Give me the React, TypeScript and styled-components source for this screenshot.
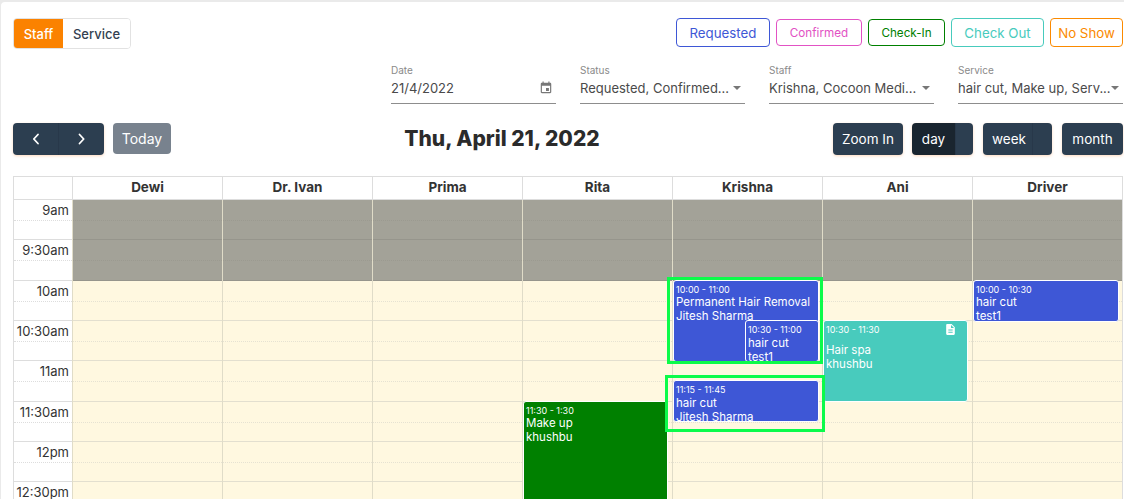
import React from "react";
import styled, { createGlobalStyle } from "styled-components";

const Global = createGlobalStyle`
  html, body { margin: 0; padding: 0; background: #eaeaea; }
  * { box-sizing: border-box; }
  body { font-family: Inter, "Liberation Sans", sans-serif; color: #333; }
`;

const Page = styled.div`
  height: 499px;
  overflow: hidden;
  padding: 2px 0 0 1px;
`;
const Card = styled.div`
  height: 100%;
  background: #fff;
  border-radius: 4px 0 0 0;
  padding: 16px 1px 0 12px;
`;
const TopRow = styled.div`
  display: flex;
  justify-content: space-between;
  align-items: flex-start;
  height: 31px;
`;
const Toggle = styled.div`
  display: flex;
  width: 118px;
  height: 31px;
  border: 1px solid #e2e2e2;
  border-radius: 4px;
  overflow: hidden;
`;
const ToggleItem = styled.div<{ $active?: boolean }>`
  flex: ${(p) => (p.$active ? "0 0 49px" : "1")};
  display: flex;
  align-items: center;
  justify-content: center;
  font-size: 13px;
  font-weight: 500;
  background: ${(p) => (p.$active ? "#fb8200" : "#fff")};
  color: ${(p) => (p.$active ? "#fff" : "#333f50")};
`;
const Legend = styled.div`
  display: flex;
  align-items: center;
  gap: 6px;
  height: 29px;
`;
const LegendItem = styled.div<{ $color: string; $small?: boolean; $width: number }>`
  display: flex;
  align-items: center;
  justify-content: center;
  width: ${(p) => p.$width}px;
  height: ${(p) => (p.$small ? 27 : 29)}px;
  border: 1px solid ${(p) => p.$color};
  border-radius: 4px;
  color: ${(p) => p.$color};
  font-size: ${(p) => (p.$small ? 11.7 : 13.3)}px;
`;
const Filters = styled.div`
  display: flex;
  justify-content: flex-end;
  gap: 24px;
  margin-top: 15px;
`;
const Field = styled.div`
  width: 165px;
  height: 40px;
  border-bottom: 1px solid #8d8d8d;
  display: flex;
  flex-direction: column;
`;
const FieldLabel = styled.div`
  font-size: 10px;
  line-height: 12px;
  color: #8a8a8a;
`;
const FieldValue = styled.div`
  display: flex;
  align-items: center;
  justify-content: space-between;
  height: 20px;
  margin-top: 2px;
  font-size: 13px;
  color: #4a4a4a;
  white-space: nowrap;
`;
const Caret = styled.span`
  width: 0;
  height: 0;
  margin-right: 4px;
  border-left: 4.5px solid transparent;
  border-right: 4.5px solid transparent;
  border-top: 4.5px solid #777;
`;
const Toolbar = styled.div`
  display: flex;
  justify-content: space-between;
  align-items: flex-start;
  margin-top: 19px;
  height: 32px;
`;
const ToolLeft = styled.div`
  display: flex;
  gap: 9px;
`;
const ToolRight = styled.div`
  display: flex;
  justify-content: flex-end;
`;
const NavGroup = styled.div`
  display: flex;
  border-radius: 4px;
  overflow: hidden;
  box-shadow: 0 1px 3px rgba(251, 150, 70, 0.35);
`;
const DarkButton = styled.div<{ $width: number; $active?: boolean; $edge?: boolean }>`
  display: flex;
  align-items: center;
  justify-content: ${(p) => (p.$edge ? "flex-start" : "center")};
  padding-left: ${(p) => (p.$edge ? 9 : 0)}px;
  width: ${(p) => p.$width}px;
  height: 32px;
  background: ${(p) => (p.$active ? "#1a252f" : "#2c3e50")};
  color: #fff;
  font-size: 13.5px;
  & + & {
    border-left: 1px solid #28384a;
  }
`;
const SplitButton = styled.div<{ $gap: number }>`
  display: flex;
  margin-left: ${(p) => p.$gap}px;
  border-radius: 4px;
  overflow: hidden;
  box-shadow: 0 1px 3px rgba(251, 150, 70, 0.35);
`;
const TodayButton = styled.div`
  display: flex;
  align-items: center;
  justify-content: center;
  width: 58px;
  height: 31px;
  border-radius: 4px;
  background: #78828e;
  color: #fff;
  font-size: 14px;
`;
const Title = styled.h2`
  margin: 0;
  font-size: 21px;
  line-height: 32px;
  font-weight: 800;
  color: #2b2b2b;
  white-space: nowrap;
`;
const Calendar = styled.div`
  margin-top: 21px;
  border: 1px solid #ddd;
  border-bottom: 0;
`;
const HeaderRow = styled.div`
  display: grid;
  grid-template-columns: 58px repeat(7, 1fr);
  height: 23px;
  border-bottom: 1px solid #ddd;
`;
const HeaderCell = styled.div`
  display: flex;
  align-items: center;
  justify-content: center;
  padding-bottom: 2px;
  border-left: 1px solid #ddd;
  font-size: 13.5px;
  font-weight: 700;
  color: #333;
  &:first-child { border-left: 0; }
`;
const Body = styled.div`
  display: grid;
  grid-template-columns: 58px repeat(7, 1fr);
`;
const TimeCol = styled.div``;
const TimeCell = styled.div`
  height: 40.33px;
  border-bottom: 1px solid #ddd;
  position: relative;
  text-align: right;
  padding: 2px 3px 0 0;
  font-size: 13px;
  line-height: 17px;
  color: #333;
  &::after {
    content: "";
    position: absolute;
    left: 0;
    right: 0;
    top: 20px;
    border-top: 1px dotted #ddd;
  }
`;
const DayCol = styled.div`
  position: relative;
  border-left: 1px solid #e0dcc8;
`;
const Slot = styled.div<{ $closed?: boolean }>`
  height: 40.33px;
  position: relative;
  background: ${(p) => (p.$closed ? "#a3a298" : "#fff8e0")};
  border-bottom: 1px solid ${(p) => (p.$closed ? "#96958c" : "#e3dfcf")};
  &::after {
    content: "";
    position: absolute;
    left: 0;
    right: 0;
    top: 20px;
    border-top: 1px dotted ${(p) => (p.$closed ? "#9b9a90" : "#e6e2d2")};
  }
`;
const Event = styled.div<{ $top: number; $height: number; $left: number; $right: number; $color: string }>`
  position: absolute;
  top: ${(p) => p.$top}px;
  height: ${(p) => p.$height}px;
  left: ${(p) => p.$left}px;
  right: ${(p) => p.$right}px;
  background: ${(p) => p.$color};
  border: 1px solid #fff;
  border-radius: 3px;
  padding: 3px 1px 0 2px;
  overflow: hidden;
  color: #fff;
  z-index: 1;
`;
const EventTime = styled.div<{ $gap: number }>`
  font-size: 9px;
  line-height: 11px;
  margin-bottom: ${(p) => p.$gap}px;
`;
const EventText = styled.div`
  font-size: 11.5px;
  line-height: 14px;
  white-space: nowrap;
`;
const NoteIcon = styled.svg`
  position: absolute;
  top: 2px;
  right: 10px;
  width: 13px;
  height: 13px;
  fill: #fff;
`;
const Highlight = styled.div<{ $top: number; $height: number; $left: number; $right: number }>`
  position: absolute;
  top: ${(p) => p.$top}px;
  height: ${(p) => p.$height}px;
  left: ${(p) => p.$left}px;
  right: ${(p) => p.$right}px;
  border: 3px solid #0cfb4a;
  z-index: 2;
  pointer-events: none;
`;

const Chevron = ({ dir }: { dir: "l" | "r" }) => (
  <svg width="14" height="14" viewBox="0 0 14 14" fill="none" stroke="#fff" strokeWidth="1.8" strokeLinecap="round" strokeLinejoin="round">
    <path d={dir === "l" ? "M9 2.5 4.8 7 9 11.5" : "M4.5 2.5 8.7 7 4.5 11.5"} />
  </svg>
);

const legend = [
  { t: "Requested", c: "#3e57d6", w: 94 },
  { t: "Confirmed", c: "#e252c4", w: 86, s: true },
  { t: "Check-In", c: "#008000", w: 77, s: true },
  { t: "Check Out", c: "#48cbbd", w: 93 },
  { t: "No Show", c: "#fb8a00", w: 73 },
];
const days = ["Dewi", "Dr. Ivan", "Prima", "Rita", "Krishna", "Ani", "Driver"];
const times = ["9am", "9:30am", "10am", "10:30am", "11am", "11:30am", "12pm", "12:30pm"];
const BLUE = "#3e57d6";

type Ev = { top: number; h: number; l: number; r: number; c: string; time: string; gap: number; lines: string[]; note?: boolean };
const events: Record<string, Ev[]> = {
  Rita: [{ top: 201, h: 120, l: 0, r: 4, c: "#008000", time: "11:30 - 1:30", gap: 0, lines: ["Make up", "khushbu"] }],
  Krishna: [
    { top: 80, h: 82, l: 0, r: 3, c: BLUE, time: "10:00 - 11:00", gap: 0, lines: ["Permanent Hair Removal", "Jitesh Sharma"] },
    { top: 120, h: 42, l: 72, r: 3, c: BLUE, time: "10:30 - 11:00", gap: 1, lines: ["hair cut", "test1"] },
    { top: 180, h: 42, l: 0, r: 3, c: BLUE, time: "11:15 - 11:45", gap: 1, lines: ["hair cut", "Jitesh Sharma"] },
  ],
  Ani: [{ top: 120, h: 82, l: 0, r: 4, c: "#48cbbd", time: "10:30 - 11:30", gap: 8, lines: ["Hair spa", "khushbu"], note: true }],
  Driver: [{ top: 80, h: 42, l: 0, r: 3, c: BLUE, time: "10:00 - 10:30", gap: 0, lines: ["hair cut", "test1"] }],
};

export default function App() {
  return (
    <Page>
      <Global />
      <Card>
        <TopRow>
          <Toggle>
            <ToggleItem $active>Staff</ToggleItem>
            <ToggleItem>Service</ToggleItem>
          </Toggle>
          <Legend>
            {legend.map((l) => (
              <LegendItem key={l.t} $color={l.c} $small={l.s} $width={l.w}>{l.t}</LegendItem>
            ))}
          </Legend>
        </TopRow>
        <Filters>
          <Field>
            <FieldLabel>Date</FieldLabel>
            <FieldValue>
              21/4/2022
              <svg width="14" height="14" viewBox="0 0 24 24" fill="#777" style={{ marginRight: 3 }}>
                <path d="M17 12h-5v5h5v-5zM16 1v2H8V1H6v2H5c-1.11 0-1.99.9-1.99 2L3 19c0 1.1.89 2 2 2h14c1.1 0 2-.9 2-2V5c0-1.1-.9-2-2-2h-1V1h-2zm3 18H5V8h14v11z" />
              </svg>
            </FieldValue>
          </Field>
          <Field>
            <FieldLabel>Status</FieldLabel>
            <FieldValue>Requested, Confirmed...<Caret /></FieldValue>
          </Field>
          <Field>
            <FieldLabel>Staff</FieldLabel>
            <FieldValue>Krishna, Cocoon Medi...<Caret /></FieldValue>
          </Field>
          <Field>
            <FieldLabel>Service</FieldLabel>
            <FieldValue>hair cut, Make up, Serv...<Caret /></FieldValue>
          </Field>
        </Filters>
        <Toolbar>
          <ToolLeft>
            <NavGroup>
              <DarkButton $width={45}><Chevron dir="l" /></DarkButton>
              <DarkButton $width={46}><Chevron dir="r" /></DarkButton>
            </NavGroup>
            <TodayButton>Today</TodayButton>
          </ToolLeft>
          <Title>Thu, April 21, 2022</Title>
          <ToolRight>
            <SplitButton $gap={0}><DarkButton $width={70}>Zoom In</DarkButton></SplitButton>
            <SplitButton $gap={9}>
              <DarkButton $width={43} $active>day</DarkButton>
              <DarkButton $width={18} />
            </SplitButton>
            <SplitButton $gap={10}>
              <DarkButton $width={49} $edge>week</DarkButton>
              <DarkButton $width={20} />
            </SplitButton>
            <SplitButton $gap={10}><DarkButton $width={61}>month</DarkButton></SplitButton>
          </ToolRight>
        </Toolbar>
        <Calendar>
          <HeaderRow>
            <HeaderCell />
            {days.map((d) => <HeaderCell key={d}>{d}</HeaderCell>)}
          </HeaderRow>
          <Body>
            <TimeCol>
              {times.map((t) => <TimeCell key={t}>{t}</TimeCell>)}
            </TimeCol>
            {days.map((d) => (
              <DayCol key={d}>
                {times.map((t, i) => <Slot key={t} $closed={i < 2} />)}
                {(events[d] ?? []).map((e) => (
                  <Event key={e.time} $top={e.top} $height={e.h} $left={e.l} $right={e.r} $color={e.c}>
                    <EventTime $gap={e.gap}>{e.time}</EventTime>
                    {e.lines.map((line) => <EventText key={line}>{line}</EventText>)}
                    {e.note && (
                      <NoteIcon viewBox="0 0 24 24">
                        <path d="M14 2H6c-1.1 0-1.99.9-1.99 2L4 20c0 1.1.89 2 1.99 2H18c1.1 0 2-.9 2-2V8l-6-6zm2 16H8v-2h8v2zm0-4H8v-2h8v2zm-3-5V3.5L18.5 9H13z" />
                      </NoteIcon>
                    )}
                  </Event>
                ))}
                {d === "Krishna" && (
                  <>
                    <Highlight $top={77} $height={87} $left={-6} $right={-1} />
                    <Highlight $top={175} $height={57} $left={-8} $right={-3} />
                  </>
                )}
              </DayCol>
            ))}
          </Body>
        </Calendar>
      </Card>
    </Page>
  );
}
